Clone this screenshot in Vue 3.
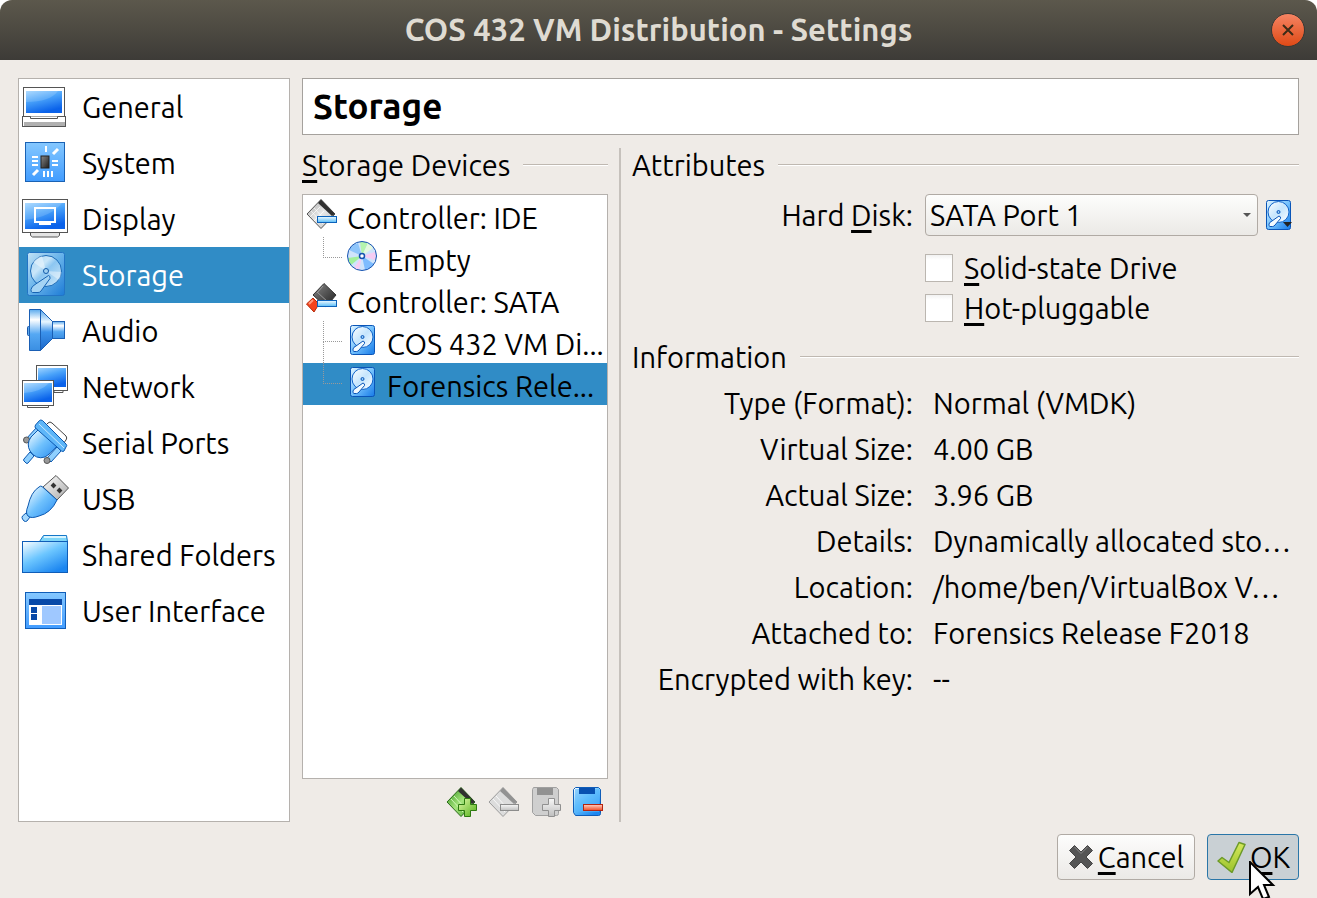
<script setup>
import { ref } from 'vue'

const sections = [
  { icon: 'general', label: 'General' },
  { icon: 'system', label: 'System' },
  { icon: 'display', label: 'Display' },
  { icon: 'storage', label: 'Storage' },
  { icon: 'audio', label: 'Audio' },
  { icon: 'network', label: 'Network' },
  { icon: 'serial', label: 'Serial Ports' },
  { icon: 'usb', label: 'USB' },
  { icon: 'folder', label: 'Shared Folders' },
  { icon: 'ui', label: 'User Interface' },
]
const section = ref('storage')

const devices = [
  { icon: 'ide', label: 'Controller: IDE' },
  { icon: 'disc', label: 'Empty', child: true },
  { icon: 'sata', label: 'Controller: SATA' },
  { icon: 'disk', label: 'COS 432 VM Di...', child: true, more: true },
  { icon: 'disk', label: 'Forensics Rele...', child: true },
]
const device = ref(4)

const tools = [
  { icon: 'ctl-add', title: 'Add controller' },
  { icon: 'ctl-remove', title: 'Remove controller', disabled: true },
  { icon: 'att-add', title: 'Add attachment', disabled: true },
  { icon: 'att-remove', title: 'Remove attachment' },
]

const port = ref('SATA Port 1')
const ssd = ref(false)
const hotplug = ref(false)

const info = [
  ['Type (Format):', 'Normal (VMDK)'],
  ['Virtual Size:', '4.00 GB'],
  ['Actual Size:', '3.96 GB'],
  ['Details:', 'Dynamically allocated sto…'],
  ['Location:', '/home/ben/VirtualBox V…'],
  ['Attached to:', 'Forensics Release F2018'],
  ['Encrypted with key:', '--'],
]
</script>

<template>
  <div class="win">
    <!-- icon sheet -->
    <svg class="sheet" width="0" height="0" aria-hidden="true">
      <defs>
        <linearGradient id="g-screen" x1="0" y1="0" x2="0.4" y2="1">
          <stop offset="0" stop-color="#9fd4ff" />
          <stop offset="0.45" stop-color="#4aa3fa" />
          <stop offset="1" stop-color="#0a62ea" />
        </linearGradient>
        <linearGradient id="g-tile" x1="0" y1="0" x2="0" y2="1">
          <stop offset="0" stop-color="#85c8ff" />
          <stop offset="1" stop-color="#419cff" />
        </linearGradient>
        <linearGradient id="g-disk" x1="0" y1="0" x2="1" y2="1">
          <stop offset="0" stop-color="#e4f6ff" />
          <stop offset="0.5" stop-color="#74c2fd" />
          <stop offset="1" stop-color="#1579e8" />
        </linearGradient>
        <linearGradient id="g-disksel" x1="0" y1="0" x2="1" y2="1">
          <stop offset="0" stop-color="#c3e3f6" />
          <stop offset="0.5" stop-color="#66b2ea" />
          <stop offset="1" stop-color="#1d7bd6" />
        </linearGradient>
        <linearGradient id="g-platter" x1="0" y1="0" x2="1" y2="1">
          <stop offset="0" stop-color="#a9d6f5" />
          <stop offset="0.35" stop-color="#c9e6f9" />
          <stop offset="0.5" stop-color="#8cc6f1" />
          <stop offset="1" stop-color="#d3ebfa" />
        </linearGradient>
        <linearGradient id="g-platter2" x1="0" y1="0" x2="1" y2="1">
          <stop offset="0" stop-color="#ffffff" />
          <stop offset="0.5" stop-color="#c5e5fd" />
          <stop offset="1" stop-color="#ffffff" />
        </linearGradient>
        <linearGradient id="g-horn" x1="0" y1="0" x2="0" y2="1">
          <stop offset="0" stop-color="#4aa0ec" />
          <stop offset="0.3" stop-color="#e9f6ff" />
          <stop offset="0.55" stop-color="#3c93ec" />
          <stop offset="1" stop-color="#1d68c8" />
        </linearGradient>
        <linearGradient id="g-horn2" x1="0" y1="0" x2="0" y2="1">
          <stop offset="0" stop-color="#5cabee" />
          <stop offset="0.25" stop-color="#ffffff" />
          <stop offset="0.6" stop-color="#55a8f3" />
          <stop offset="1" stop-color="#3a8ee2" />
        </linearGradient>
        <linearGradient id="g-plug" x1="0" y1="0" x2="1" y2="1">
          <stop offset="0.1" stop-color="#e6f6ff" />
          <stop offset="0.5" stop-color="#6fc1fd" />
          <stop offset="1" stop-color="#2589f0" />
        </linearGradient>
        <linearGradient id="g-folder" x1="0" y1="0" x2="0.7" y2="1">
          <stop offset="0" stop-color="#ffffff" />
          <stop offset="0.5" stop-color="#6cc6ff" />
          <stop offset="1" stop-color="#1c86f0" />
        </linearGradient>
        <linearGradient id="g-metal" x1="0" y1="0" x2="1" y2="1">
          <stop offset="0" stop-color="#ffffff" />
          <stop offset="1" stop-color="#a8a8a8" />
        </linearGradient>
        <linearGradient id="g-bluebar" x1="0" y1="0" x2="0" y2="1">
          <stop offset="0" stop-color="#f2fbff" />
          <stop offset="1" stop-color="#58bcf7" />
        </linearGradient>
        <linearGradient id="g-redbar" x1="0" y1="0" x2="0" y2="1">
          <stop offset="0" stop-color="#ffd2c4" />
          <stop offset="1" stop-color="#f04a25" />
        </linearGradient>
        <linearGradient id="g-graybar" x1="0" y1="0" x2="0" y2="1">
          <stop offset="0" stop-color="#f8f8f8" />
          <stop offset="1" stop-color="#bebebe" />
        </linearGradient>
        <linearGradient id="g-green" x1="0" y1="0" x2="1" y2="1">
          <stop offset="0" stop-color="#e3fba8" />
          <stop offset="1" stop-color="#4fae17" />
        </linearGradient>
        <linearGradient id="g-chipg" x1="0" y1="0" x2="1" y2="1">
          <stop offset="0" stop-color="#2f8d1b" />
          <stop offset="0.5" stop-color="#a5e57c" />
          <stop offset="1" stop-color="#3f9c2b" />
        </linearGradient>
        <linearGradient id="g-chip" x1="0" y1="0" x2="1" y2="1">
          <stop offset="0" stop-color="#a6a6a6" />
          <stop offset="0.5" stop-color="#e9e9e9" />
          <stop offset="1" stop-color="#bcbcbc" />
        </linearGradient>
        <linearGradient id="g-dark" x1="0" y1="0" x2="1" y2="1">
          <stop offset="0" stop-color="#888888" />
          <stop offset="1" stop-color="#1c1c1c" />
        </linearGradient>
        <linearGradient id="g-tick" x1="0" y1="0" x2="0" y2="1">
          <stop offset="0" stop-color="#d5e95c" />
          <stop offset="1" stop-color="#9bc22c" />
        </linearGradient>
      </defs>

      <symbol id="i-general" viewBox="0 0 48 48">
        <rect x="2.500" y="4.500" width="41" height="29" fill="#fff" stroke="#555" />
        <rect x="5" y="8" width="36" height="22" fill="url(#g-screen)" />
        <path d="M5 8h32q-8 11-32 11z" fill="#fff" opacity="0.15" />
        <rect x="1.500" y="33.500" width="43" height="10" fill="#fff" stroke="#555" />
        <path d="M9.500 33.500v2h27v-2" fill="#fff" stroke="#555" />
        <rect x="3" y="39" width="41" height="4" fill="#b0b0b0" />
      </symbol>

      <symbol id="i-system" viewBox="0 0 48 48">
        <rect x="4.500" y="3.500" width="39" height="39" fill="url(#g-tile)" stroke="#1a62b4" />
        <rect x="20" y="17" width="8" height="12" fill="url(#g-dark)" stroke="#222" />
        <path d="M25 7v6M11 18h6M11 22h6M11 26h6M31 22h6M31 26h6M23 32v6M27 32v6M31 32v6" stroke="#fff" stroke-width="2" />
        <path d="M32 15l5-5M12 36l5-5" stroke="#fff" stroke-width="3" />
      </symbol>

      <symbol id="i-display" viewBox="0 0 48 48">
        <path d="M9.500 37.500h29v3l-2 1.500h-25l-2-1.500z" fill="#e4e4e4" stroke="#555" />
        <rect x="1.500" y="4.500" width="45" height="33" fill="#fff" stroke="#555" />
        <rect x="4" y="8" width="40" height="26" fill="url(#g-screen)" />
        <path d="M4 8h37Q30 22 4 25z" fill="#fff" opacity="0.15" />
        <rect x="14" y="13" width="20" height="14" fill="none" stroke="#fff" stroke-width="2" />
        <rect x="18" y="28" width="12" height="2" fill="#fff" />
      </symbol>

      <symbol id="i-storage" viewBox="0 0 48 48">
        <rect x="6.500" y="1.500" width="37" height="43" rx="2" fill="url(#g-disksel)" stroke="#2374c4" />
        <circle cx="25" cy="20" r="15.500" fill="url(#g-platter)" stroke="#1c6cb8" />
        <path d="M25 20L12 11q4-5 9-6z" fill="#fff" opacity="0.4" />
        <path d="M25 20l13 9q2-3 2.500-8z" fill="#fff" opacity="0.4" />
        <circle cx="25" cy="20" r="2.500" fill="#9fd0f2" stroke="#135aa8" />
        <path d="M27.500 24.500q2 .5 1.500 3L20 40q-1 1.500-3 1.500h-5.500q-2-.5-1.500-3 .5-3 4-5z" fill="#a5d4f4" stroke="#1763b3" />
      </symbol>

      <symbol id="i-audio" viewBox="0 0 48 48">
        <rect x="6.500" y="19.500" width="4" height="9" rx="1" fill="#5ba9ee" stroke="#1a56a8" />
        <path d="M8.500 2.500h11v41h-11z" fill="url(#g-horn2)" stroke="#1a5fb4" />
        <path d="M19.500 2.500L31.500 14.500v17L19.500 43.500z" fill="url(#g-horn)" stroke="#1a5fb4" />
        <rect x="31.500" y="14.500" width="12" height="17" fill="url(#g-horn2)" stroke="#1a5fb4" />
      </symbol>

      <symbol id="i-network" viewBox="0 0 48 48">
        <path d="M33 27.500h9v2h-9z" fill="#fff" stroke="#555" />
        <rect x="15.500" y="2.500" width="31" height="25" fill="#fff" stroke="#555" />
        <rect x="17" y="5" width="28" height="19" fill="url(#g-screen)" />
        <path d="M6.500 42.500h21v2h-21z" fill="#fff" stroke="#555" />
        <rect x="1.500" y="17.500" width="31" height="25" fill="#fff" stroke="#555" />
        <rect x="3" y="20" width="28" height="19" fill="url(#g-screen)" />
        <path d="M3 20h25Q20 29 3 30z" fill="#fff" opacity="0.18" />
      </symbol>

      <symbol id="i-serial" viewBox="0 0 48 48">
        <path d="M24 7l3-3q2-2 4 0l14 13q1.500 2 0 4l-3 4z" fill="#fff" stroke="#444" />
        <path d="M16 8l4 4-11 12-4-4z" fill="#8fd0ff" stroke="#0b58b0" />
        <circle cx="5.500" cy="21" r="3" fill="#999" stroke="#555" />
        <path d="M36 28l4 4-10 11-4-4z" fill="#8fd0ff" stroke="#0b58b0" />
        <circle cx="26" cy="41.500" r="3" fill="#999" stroke="#555" />
        <path d="M9 33l4 4-6 7q-1 1-2 0l-2-2q-1-1 0-2z" fill="#8fd0ff" stroke="#0b58b0" />
        <path d="M18 10L10 18q-5 7-1 14 6 9 15 6 4-2 13-12z" fill="url(#g-plug)" stroke="#0b58b0" />
        <path d="M18.500 1.500q1-1 3 0L45 25q1.500 1.500 0 3l-2 4q-1 1-2.500 0L14.500 9q-1-1 0-3z" fill="#5eb6f8" stroke="#0b58b0" />
        <path d="M18 5l25 24" stroke="#c8e9ff" />
      </symbol>

      <symbol id="i-usb" viewBox="0 0 48 48">
        <path d="M35 .5L47.500 13 36 25 22 12z" fill="url(#g-metal)" stroke="#555" />
        <path d="M31 9l3 3M37 14l3 3" stroke="#333" stroke-width="4" />
        <path d="M5 38l4 4-3 4q-1.500 1-3 0l-1.500-2q-1-1.500 0-3z" fill="#a4d8fd" stroke="#0b58b0" />
        <path d="M21 11.500L36 25Q30 38 18 41q-8 3-11 0-3-3 0-10Q10 17 18 12q1.500-1.500 3-.5z" fill="url(#g-plug)" stroke="#0b58b0" />
      </symbol>

      <symbol id="i-folder" viewBox="0 0 48 48">
        <path d="M18.500 10.500l4-6h23l1 6v6h-28z" fill="#7fd6f8" stroke="#1577c8" />
        <path d="M23 6h22" stroke="#d7f4ff" stroke-width="2" />
        <rect x="1.500" y="10.500" width="45" height="31" fill="url(#g-folder)" stroke="#0f5db8" />
      </symbol>

      <symbol id="i-ui" viewBox="0 0 48 48">
        <rect x="4.500" y="5.500" width="40" height="36" fill="url(#g-tile)" stroke="#0f5db8" />
        <rect x="8" y="18" width="33" height="20" fill="#fff" />
        <path d="M8 12h33v6H8zM10 20h6v6h-6zM10 27h6v6h-6z" fill="#0849a8" />
        <rect x="21" y="19" width="19" height="18" fill="#9fc8ff" />
      </symbol>

      <symbol id="i-ide" viewBox="0 0 32 32">
        <path d="M15 1.500L29 16 15 30.500 1 16z" fill="url(#g-chip)" stroke="#555" />
        <path d="M5 13l12 13M8 10l12 13M4 19l10-10M8 23l10-10" stroke="#fff" stroke-width="0.700" />
        <path d="M15 1.500L29 16l-3 2L12 5z" fill="#303030" />
        <rect x="11.500" y="18.500" width="19" height="6" fill="url(#g-bluebar)" stroke="#0b62bb" />
      </symbol>

      <symbol id="i-sata" viewBox="0 0 32 32">
        <path d="M18 1.500L30 13 20 25 7 13z" fill="url(#g-dark)" stroke="#333" />
        <path d="M11 10l12 11M17 4l-6 7" stroke="#9a9a9a" />
        <path d="M7 16l6 6-5 8-7.500-8z" fill="#f4431c" stroke="#b32b0c" />
        <path d="M7 18l-4 4" stroke="#ff9b7e" stroke-width="2" />
        <rect x="11.500" y="18.500" width="19" height="6" fill="url(#g-bluebar)" stroke="#0b62bb" />
      </symbol>

      <symbol id="i-disc" viewBox="0 0 32 32">
        <circle cx="16" cy="16" r="14.500" fill="#cfe4fb" />
        <path d="M16 16L3 10A14 14 0 0 1 12 3z" fill="#8ec5fb" />
        <path d="M16 16L14 2a14 14 0 0 1 8 1z" fill="#b4f4ae" />
        <path d="M16 16l6-13a14 14 0 0 1 5 5z" fill="#e4f8e0" />
        <path d="M16 16l13-4a14 14 0 0 1 0 8z" fill="#f5ccf3" />
        <path d="M16 16l12 8a14 14 0 0 1-9 6z" fill="#7dbcff" />
        <path d="M16 16l-3 14a14 14 0 0 1-5-2z" fill="#f7cdf2" />
        <path d="M16 16L5 25a14 14 0 0 1-3-7z" fill="#a2f09c" />
        <circle cx="16" cy="16" r="14.500" fill="none" stroke="#1653b0" />
        <circle cx="16" cy="16" r="2.500" fill="#fff" stroke="#1653b0" stroke-width="1.500" />
      </symbol>

      <symbol id="i-disk" viewBox="0 0 32 32">
        <rect x="4.500" y="1.500" width="24" height="29" rx="2" fill="url(#g-disk)" stroke="#0a55b8" />
        <circle cx="16.500" cy="13" r="10.500" fill="url(#g-platter2)" stroke="#0f62c8" />
        <circle cx="16.500" cy="13" r="1.500" fill="#8ecaf8" stroke="#0a55b8" />
        <path d="M17 17q2 .5 1.500 2.500L13 26q-1 1.500-2.500 1.500H8q-1.500-.5-1-2.500.5-2 3-3z" fill="#f2faff" stroke="#0a55b8" />
      </symbol>

      <symbol id="i-ctl-add" viewBox="0 0 32 32">
        <path d="M15 1.500L29 16 15 30.500 1 16z" fill="url(#g-chipg)" stroke="#2b6b1a" />
        <path d="M5 13l12 13M8 10l12 13" stroke="#d2f7ba" />
        <path d="M15 1.500L29 16l-3 2L12 5z" fill="#303030" />
        <path d="M18.500 12.500h6v6h6v6h-6v6h-6v-6h-6v-6h6z" fill="url(#g-green)" stroke="#2d7a10" />
      </symbol>

      <symbol id="i-ctl-remove" viewBox="0 0 32 32">
        <path d="M15 1.500L29 16 15 30.500 1 16z" fill="#dcdcdc" stroke="#9c9c9c" />
        <path d="M5 13l12 13M8 10l12 13" stroke="#f8f8f8" />
        <path d="M15 1.500L29 16l-3 2L12 5z" fill="#929292" />
        <rect x="12.500" y="18.500" width="18" height="6" fill="url(#g-graybar)" stroke="#8c8c8c" />
      </symbol>

      <symbol id="i-att-add" viewBox="0 0 32 32">
        <path d="M3.500 1.500h23l2 2v24q0 2-2 2h-21l-3-3v-23z" fill="#cfcfcf" stroke="#a0a0a0" />
        <rect x="7" y="2" width="16" height="7" fill="#929292" />
        <path d="M18.500 12.500h6v6h6v6h-6v6h-6v-6h-6v-6h6z" fill="url(#g-graybar)" stroke="#909090" />
      </symbol>

      <symbol id="i-att-remove" viewBox="0 0 32 32">
        <path d="M3.500 1.500h23l2 2v24q0 2-2 2h-23l-2-3v-23z" fill="url(#g-folder)" stroke="#0f5db8" />
        <path d="M3 3h24v23H5l-2-2z" fill="#55b5fb" opacity="0.6" />
        <rect x="7" y="2" width="16" height="6" fill="#0850b0" />
        <rect x="11.500" y="18.500" width="19" height="6" fill="url(#g-redbar)" stroke="#b52410" />
      </symbol>
    </svg>

    <header class="titlebar">
      <h1 class="title">COS 432 VM Distribution - Settings</h1>
      <button class="close" aria-label="Close">
        <svg width="12" height="12" viewBox="0 0 12 12"><path d="M1 1l10 10M11 1L1 11" stroke="#3c2b16" stroke-width="2" /></svg>
      </button>
    </header>

    <div class="body">
      <!-- sections -->
      <nav class="nav">
        <button
          v-for="s in sections"
          :key="s.icon"
          class="nav-item"
          :class="{ 'nav-item-active': section === s.icon }"
          @click="section = s.icon"
        >
          <svg class="nav-icon"><use :href="'#i-' + s.icon" /></svg>
          <span>{{ s.label }}</span>
        </button>
      </nav>

      <main class="page">
        <h2 class="heading">Storage</h2>

        <div class="panes">
          <!-- device tree -->
          <section class="devices">
            <h3 class="group"><span><u>S</u>torage Devices</span></h3>
            <ul class="tree">
              <li
                v-for="(d, i) in devices"
                :key="i"
                class="dev"
                :class="{ 'dev-child': d.child, 'dev-more': d.more, 'dev-active': device === i }"
                @click="device = i"
              >
                <svg class="dev-icon"><use :href="'#i-' + d.icon" /></svg>
                <span class="dev-label">{{ d.label }}</span>
              </li>
            </ul>
            <div class="tools">
              <button v-for="t in tools" :key="t.icon" class="tool" :aria-label="t.title" :disabled="t.disabled">
                <svg class="tool-icon"><use :href="'#i-' + t.icon" /></svg>
              </button>
            </div>
          </section>

          <!-- details of the selected device -->
          <section class="details">
            <h3 class="group"><span>Attributes</span></h3>
            <div class="attrs">
              <label class="key" for="port">Hard <u>D</u>isk:</label>
              <div class="port-row">
                <div class="combo">
                  <select id="port" v-model="port" class="combo-box">
                    <option>SATA Port 0</option>
                    <option>SATA Port 1</option>
                    <option>SATA Port 2</option>
                  </select>
                  <svg class="combo-arrow" width="8" height="4" viewBox="0 0 8 4"><path d="M0 0h8L4 4z" fill="#555" /></svg>
                </div>
                <button class="tool" aria-label="Choose disk">
                  <svg class="tool-icon" viewBox="0 0 32 32">
                    <use href="#i-disk" />
                    <path d="M21 23h9l-4.500 5z" fill="#222" />
                  </svg>
                </button>
              </div>
              <div class="checks">
                <label class="check"><input v-model="ssd" type="checkbox" class="box" /><span><u>S</u>olid-state Drive</span></label>
                <label class="check"><input v-model="hotplug" type="checkbox" class="box" /><span><u>H</u>ot-pluggable</span></label>
              </div>
            </div>

            <h3 class="group group-info"><span>Information</span></h3>
            <dl class="info">
              <template v-for="row in info" :key="row[0]">
                <dt class="key">{{ row[0] }}</dt>
                <dd class="value">{{ row[1] }}</dd>
              </template>
            </dl>
          </section>
        </div>
      </main>
    </div>

    <footer class="footer">
      <button class="btn">
        <svg width="26" height="26" viewBox="0 0 26 26">
          <path d="M6.500 1.500L13 8l6.500-6.500 5 5L18 13l6.500 6.500-5 5L13 18l-6.500 6.500-5-5L8 13 1.500 6.500z" fill="#555" stroke="#444" />
          <path d="M6.500 3L13 9.500 19.500 3" fill="none" stroke="#888" />
        </svg>
        <span><u>C</u>ancel</span>
      </button>
      <button class="btn btn-ok">
        <svg width="32" height="32" viewBox="0 0 32 32">
          <path d="M2 20l4-3.500 7 5L23 1.500l6 2L16 31.500z" fill="url(#g-tick)" stroke="#6c9a28" stroke-width="1.500" stroke-linejoin="round" />
        </svg>
        <span><u>O</u>K</span>
        <svg class="pointer" width="28" height="42" viewBox="0 0 28 42">
          <path d="M1 1v32l8-7 5 12 6-2-5-12h9z" fill="#fff" stroke="#000" stroke-width="2" />
        </svg>
      </button>
    </footer>
  </div>
</template>

<style>
body {
  margin: 0;
  background: #fff;
}
</style>

<style scoped>
.win {
  position: relative;
  display: flex;
  flex-direction: column;
  min-height: 100vh;
  overflow: hidden;
  border-radius: 12px 12px 0 0;
  background: #efebe7;
  color: #000;
  font-family: Ubuntu, "Noto Sans", sans-serif;
  font-size: 29px;
  line-height: 36px;
}

.sheet { position: absolute; }

h1, h2, h3, ul, dl, dd { margin: 0; padding: 0; }

button, select, input {
  margin: 0;
  font: inherit;
  color: inherit;
}

u {
  text-decoration: underline;
  text-decoration-thickness: 3px;
  text-underline-offset: 4px;
  text-decoration-skip-ink: none;
}

/* ── Title bar ── */
.titlebar {
  position: relative;
  display: flex;
  align-items: center;
  justify-content: center;
  height: 60px;
  background: linear-gradient(#5c584c, #3d3b37);
}

.title {
  font-size: 31px;
  font-weight: 700;
  color: #dfdbd2;
}

.close {
  position: absolute;
  right: 12px;
  display: flex;
  align-items: center;
  justify-content: center;
  width: 34px;
  height: 34px;
  padding: 0;
  border: 1px solid #3a3834;
  border-radius: 50%;
  background: linear-gradient(#f58463, #df4a16);
}

/* ── Layout ── */
.body {
  flex: 1;
  display: grid;
  grid-template-columns: 272px 1fr;
  gap: 12px;
  padding: 18px 18px 12px;
}

.page {
  display: flex;
  flex-direction: column;
  gap: 13px;
  min-width: 0;
}

/* ── Sections ── */
.nav {
  border: 1px solid #b5b1ad;
  background: #fff;
}

.nav-item {
  display: flex;
  align-items: center;
  gap: 13px;
  width: 100%;
  height: 56px;
  padding: 0 2px;
  border: 0;
  background: none;
  text-align: left;
  white-space: nowrap;
}

.nav-item-active {
  background: #308cc6;
  color: #fff;
}

.nav-icon {
  flex: none;
  width: 48px;
  height: 48px;
}

.heading {
  padding: 9px 10px 10px;
  border: 1px solid #a5a19d;
  background: #fff;
  font-size: 35px;
  font-weight: 700;
}

.panes {
  flex: 1;
  display: grid;
  grid-template-columns: 306px 1fr;
  gap: 11px;
}

.group {
  display: flex;
  align-items: center;
  gap: 13px;
  font-size: 29px;
  font-weight: 400;
  line-height: 34px;
  white-space: nowrap;
}

.group::after {
  content: '';
  flex: 1;
  border-top: 1px solid #bfb8b1;
  border-bottom: 1px solid #fff;
}

/* ── Device tree ── */
.devices {
  display: flex;
  flex-direction: column;
}

.tree {
  flex: 1;
  margin-top: 12px;
  border: 1px solid #b5b1ad;
  background: #fff;
  list-style: none;
}

.dev {
  position: relative;
  display: flex;
  gap: 9px;
  height: 42px;
  padding-left: 3px;
  box-sizing: border-box;
}

.dev-child { padding-left: 43px; }
.dev-active { background: #308cc6; }

.dev-child::before {
  content: '';
  position: absolute;
  left: 20px;
  top: 0;
  width: 18px;
  height: 20px;
  border-left: 1px dotted #999;
  border-bottom: 1px dotted #999;
}

.dev-more::after {
  content: '';
  position: absolute;
  left: 20px;
  top: 21px;
  height: 21px;
  border-left: 1px dotted #999;
}

.dev-icon {
  flex: none;
  width: 32px;
  height: 32px;
  margin-top: 3px;
}

.dev-label {
  padding-top: 5px;
  white-space: nowrap;
}

.tools {
  display: flex;
  justify-content: flex-end;
  gap: 10px;
  padding: 7px 4px 4px;
}

.tool {
  display: flex;
  padding: 0;
  border: 0;
  background: none;
}

.tool-icon {
  width: 32px;
  height: 32px;
}

/* ── Details ── */
.details {
  min-width: 0;
  padding-left: 11px;
  border-left: 2px solid #c6c1bc;
}

.attrs, .info {
  display: grid;
  grid-template-columns: 281px 1fr;
  column-gap: 12px;
}

.attrs {
  margin-top: 12px;
  row-gap: 14px;
}

.key {
  line-height: 42px;
  text-align: right;
  white-space: nowrap;
}

.port-row {
  display: flex;
  align-items: center;
  gap: 4px;
  padding-right: 5px;
}

.combo {
  position: relative;
  flex: 1;
}

.combo-box {
  appearance: none;
  display: block;
  width: 100%;
  height: 42px;
  padding: 0 4px;
  border: 1px solid #b0aaa4;
  border-radius: 4px;
  background: linear-gradient(#fdfdfc, #ebe9e6);
}

.combo-arrow {
  position: absolute;
  right: 7px;
  top: 19px;
  pointer-events: none;
}

.checks {
  grid-column: 2;
  display: flex;
  flex-direction: column;
  gap: 4px;
}

.check {
  display: flex;
  align-items: center;
  gap: 11px;
}

.box {
  appearance: none;
  width: 28px;
  height: 28px;
  border: 1px solid #bbb6b0;
  background: linear-gradient(#f2f2f2, #fff 5px);
}

.box:checked { background: #308cc6; }

.group-info { margin-top: 14px; }

.info {
  margin-top: 6px;
}

.info .key, .value { line-height: 46px; }

.value {
  padding-left: 8px;
  overflow: hidden;
  white-space: nowrap;
}

/* ── Footer ── */
.footer {
  display: flex;
  justify-content: flex-end;
  gap: 12px;
  padding: 0 18px 18px;
}

.btn {
  position: relative;
  display: flex;
  align-items: center;
  justify-content: center;
  gap: 4px;
  width: 138px;
  height: 46px;
  padding: 0;
  border: 1px solid #b0aaa4;
  border-radius: 4px;
  background: linear-gradient(#fdfdfc, #ebe9e6);
}

.btn-ok {
  gap: 2px;
  width: 92px;
  border-color: #2a76a8;
  background: #c9d0d4;
}

.pointer {
  position: absolute;
  left: 41px;
  top: 26px;
  pointer-events: none;
}
</style>
